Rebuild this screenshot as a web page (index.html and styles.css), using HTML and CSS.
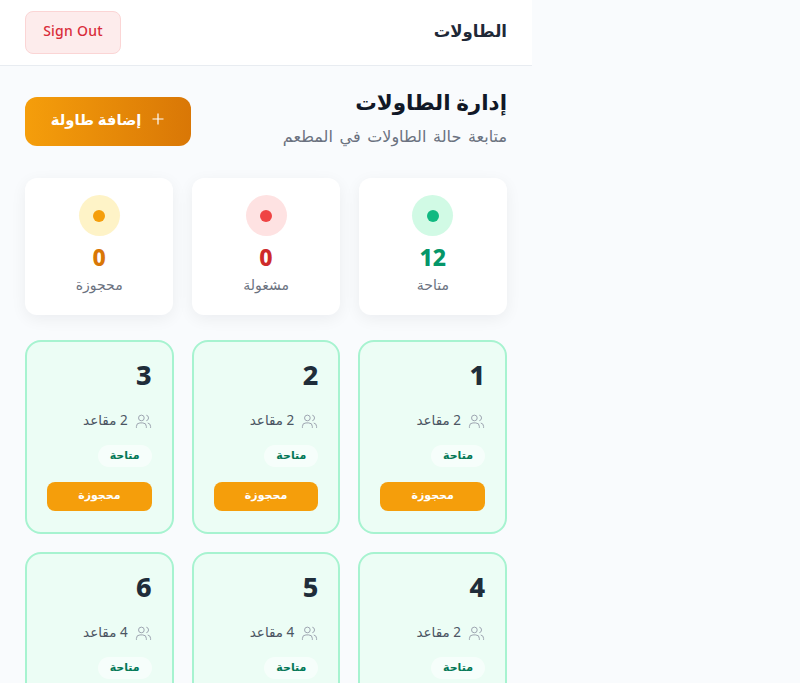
FILE: index.html
```html
<!DOCTYPE html>
<html lang="ar" dir="rtl">
<head>
<meta charset="utf-8">
<title>الطاولات</title>
<link rel="stylesheet" href="styles.css">
</head>
<body>
<div class="shell">
  <header class="topbar">
    <h1 class="topbar-title">الطاولات</h1>
    <button class="signout" dir="ltr">Sign Out</button>
  </header>
  <main class="content">
    <section class="page-head">
      <div>
        <h2 class="page-title">إدارة الطاولات</h2>
        <p class="page-sub">متابعة حالة الطاولات في المطعم</p>
      </div>
      <button class="add-btn"><span class="plus"><svg width="14" height="14" viewBox="0 0 14 14"><path d="M7 1.5v11M1.5 7h11" stroke="currentColor" stroke-width="1.2" fill="none"/></svg></span>إضافة طاولة</button>
    </section>
    <section class="stats">
      <div class="stat"><div class="stat-ring ring-green"><i class="dot dot-green"></i></div><div class="stat-num num-green">12</div><div class="stat-label">متاحة</div></div>
      <div class="stat"><div class="stat-ring ring-red"><i class="dot dot-red"></i></div><div class="stat-num num-red">0</div><div class="stat-label">مشغولة</div></div>
      <div class="stat"><div class="stat-ring ring-amber"><i class="dot dot-amber"></i></div><div class="stat-num num-amber">0</div><div class="stat-label">محجوزة</div></div>
    </section>
    <section class="tables">
      <article class="table-card"><div class="table-num">1</div><div class="seats"><svg class="people" viewBox="0 0 24 24"><circle cx="9" cy="7" r="4"/><path d="M2 21v-2a5 5 0 0 1 5-5h4a5 5 0 0 1 5 5v2"/><path d="M16 3.1a4 4 0 0 1 0 7.8M22 21v-2a5 5 0 0 0-4-4.9"/></svg><span>2 مقاعد</span></div><span class="badge">متاحة</span><button class="reserve">محجوزة</button></article>
      <article class="table-card"><div class="table-num">2</div><div class="seats"><svg class="people" viewBox="0 0 24 24"><circle cx="9" cy="7" r="4"/><path d="M2 21v-2a5 5 0 0 1 5-5h4a5 5 0 0 1 5 5v2"/><path d="M16 3.1a4 4 0 0 1 0 7.8M22 21v-2a5 5 0 0 0-4-4.9"/></svg><span>2 مقاعد</span></div><span class="badge">متاحة</span><button class="reserve">محجوزة</button></article>
      <article class="table-card"><div class="table-num">3</div><div class="seats"><svg class="people" viewBox="0 0 24 24"><circle cx="9" cy="7" r="4"/><path d="M2 21v-2a5 5 0 0 1 5-5h4a5 5 0 0 1 5 5v2"/><path d="M16 3.1a4 4 0 0 1 0 7.8M22 21v-2a5 5 0 0 0-4-4.9"/></svg><span>2 مقاعد</span></div><span class="badge">متاحة</span><button class="reserve">محجوزة</button></article>
      <article class="table-card"><div class="table-num">4</div><div class="seats"><svg class="people" viewBox="0 0 24 24"><circle cx="9" cy="7" r="4"/><path d="M2 21v-2a5 5 0 0 1 5-5h4a5 5 0 0 1 5 5v2"/><path d="M16 3.1a4 4 0 0 1 0 7.8M22 21v-2a5 5 0 0 0-4-4.9"/></svg><span>2 مقاعد</span></div><span class="badge">متاحة</span><button class="reserve">محجوزة</button></article>
      <article class="table-card"><div class="table-num">5</div><div class="seats"><svg class="people" viewBox="0 0 24 24"><circle cx="9" cy="7" r="4"/><path d="M2 21v-2a5 5 0 0 1 5-5h4a5 5 0 0 1 5 5v2"/><path d="M16 3.1a4 4 0 0 1 0 7.8M22 21v-2a5 5 0 0 0-4-4.9"/></svg><span>4 مقاعد</span></div><span class="badge">متاحة</span><button class="reserve">محجوزة</button></article>
      <article class="table-card"><div class="table-num">6</div><div class="seats"><svg class="people" viewBox="0 0 24 24"><circle cx="9" cy="7" r="4"/><path d="M2 21v-2a5 5 0 0 1 5-5h4a5 5 0 0 1 5 5v2"/><path d="M16 3.1a4 4 0 0 1 0 7.8M22 21v-2a5 5 0 0 0-4-4.9"/></svg><span>4 مقاعد</span></div><span class="badge">متاحة</span><button class="reserve">محجوزة</button></article>
    </section>
  </main>
</div>
</body>
</html>
```
FILE: styles.css
```css
* { box-sizing: border-box; }
html, body { margin: 0; height: 683px; overflow: hidden; }
body { background: #f9fbfd; font-family: "Noto Sans", "DejaVu Sans", sans-serif; color: #0f172a; direction: ltr; }
.shell { width: 532px; direction: rtl; }
.topbar { height: 66px; background: #fff; border-bottom: 1px solid #e8ecf1; padding: 0 25px; display: flex; align-items: center; justify-content: space-between; }
.topbar-title { margin: 0 0 4px; font-size: 16.5px; font-weight: 800; color: #1f2937; }
.signout { width: 96px; height: 43px; background: #fdecec; border: 1px solid #fbd5d5; border-radius: 8px; color: #d92d3a; font: 500 14px "Noto Sans", sans-serif; letter-spacing: .25px; padding: 0 0 5px 0; }
.content { padding: 22px 25px 0; }
.page-head { display: flex; justify-content: space-between; align-items: flex-start; margin-bottom: 30px; }
.page-title { margin: 0 0 8px; font-size: 21.5px; line-height: 28px; font-weight: 800; color: #111827; }
.page-sub { margin: 0; font-size: 16px; line-height: 24px; word-spacing: 2.5px; color: #6b7280; }
.add-btn { width: 166px; height: 49px; margin-top: 9px; border: 0; border-radius: 12px; background: linear-gradient(90deg, #f59e0b, #d97706); color: #fff; font: 700 14.8px "Noto Sans", "DejaVu Sans", sans-serif; display: flex; align-items: center; justify-content: center; gap: 10px; padding: 0 0 5px; }
.plus { display: flex; }
.stats { display: grid; grid-template-columns: repeat(3, 1fr); gap: 18.5px; margin-bottom: 25px; }
.stat { height: 137px; background: #fff; border-radius: 12px; box-shadow: 0 4px 16px rgba(15,23,42,.06); display: flex; flex-direction: column; align-items: center; padding-top: 17px; }
.stat-ring { width: 41px; height: 41px; border-radius: 50%; display: flex; align-items: center; justify-content: center; }
.dot { width: 12px; height: 12px; border-radius: 50%; display: block; }
.ring-green { background: #d1fae5; } .dot-green { background: #10b981; }
.ring-red { background: #fee2e2; } .dot-red { background: #ef4444; }
.ring-amber { background: #fef3c7; } .dot-amber { background: #f59e0b; }
.stat-num { margin-top: 6px; font-size: 23px; line-height: 30px; font-weight: 800; }
.num-green { color: #059669; } .num-red { color: #ce2b2b; } .num-amber { color: #d97706; }
.stat-label { margin-top: 3px; font-size: 14px; line-height: 20px; color: #6b7280; }
.tables { display: grid; grid-template-columns: repeat(3, 1fr); gap: 18px; }
.table-card { height: 194px; background: #ecfdf5; border: 2px solid #a7f3d0; border-radius: 16px; padding: 15px 20px; display: flex; flex-direction: column; align-items: flex-start; }
.table-num { font-size: 27px; line-height: 36px; font-weight: 800; color: #1f2d3a; }
.seats { margin-top: 17px; display: flex; align-items: center; gap: 7px; font-size: 13.5px; line-height: 20px; color: #4b5563; }
.people { width: 17px; height: 17px; fill: none; stroke: #9ca3af; stroke-width: 1.4; margin-top: 2px; }
.badge { margin-top: 15px; background: rgba(255,255,255,.55); color: #047857; font-size: 11px; font-weight: 700; line-height: 16px; padding: 2px 12px 4px; border-radius: 999px; }
.reserve { margin-top: 15px; width: 100%; height: 29px; background: #f59e0b; border: 0; border-radius: 8px; color: #fff; font: 700 11px "Noto Sans", "DejaVu Sans", sans-serif; padding: 0 0 4px; }
```
